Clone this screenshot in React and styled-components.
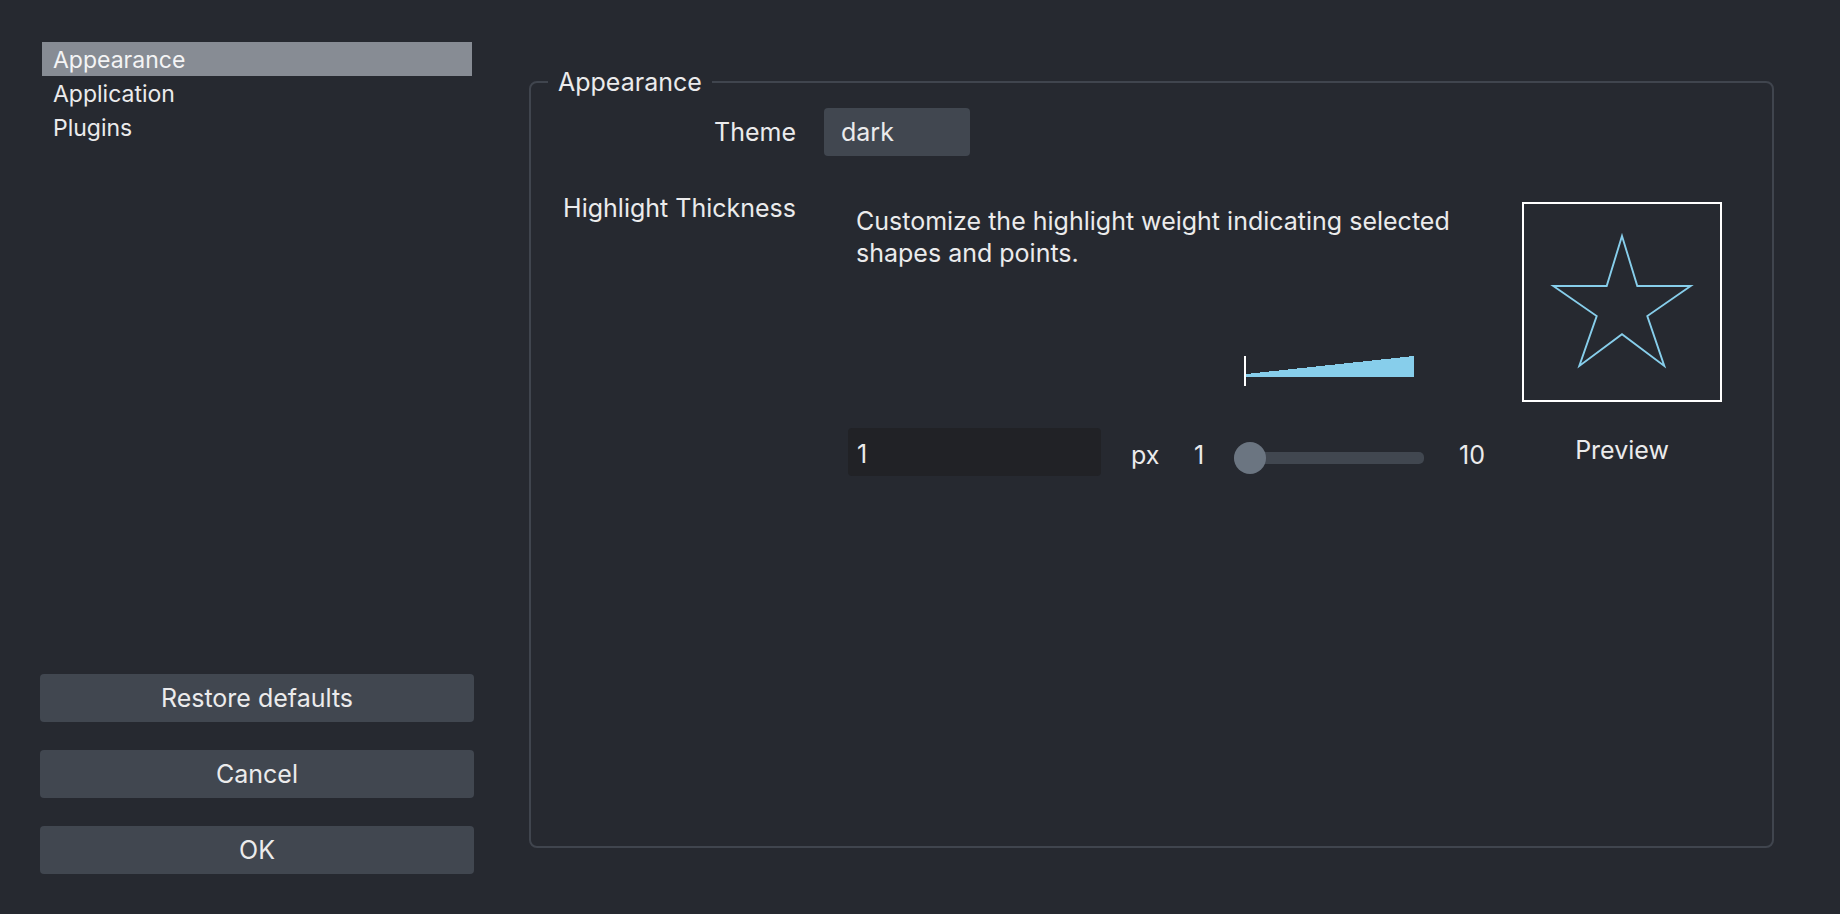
import React from 'react';
import styled, { createGlobalStyle } from 'styled-components';

const GlobalStyle = createGlobalStyle`
  html, body { margin: 0; padding: 0; background: #262930; }
  body {
    font-family: Inter, "Noto Sans", "Liberation Sans", sans-serif;
    color: #ebebec;
    font-size: 25px;
  }
  * { box-sizing: border-box; }
`;

const Window = styled.div`
  display: flex;
  width: 1840px;
  height: 914px;
  padding: 42px 66px 40px 40px;
  background: #262930;
`;

const Sidebar = styled.aside`
  width: 434px;
  flex: none;
  display: flex;
  flex-direction: column;
  justify-content: space-between;
`;

const NavList = styled.ul`
  list-style: none;
  margin: 0 0 0 2px;
  padding: 0;
  width: 430px;
  font-size: 23px;
`;

const NavItem = styled.li`
  height: 34px;
  padding: 2px 0 0 11px;
  line-height: 32px;
  background: ${(p) => (p.$active ? '#878c94' : 'transparent')};
  color: ${(p) => (p.$active ? '#f4f4f5' : '#ebebec')};
`;

const ButtonStack = styled.div`
  display: flex;
  flex-direction: column;
  gap: 28px;
`;

const Button = styled.button`
  height: 48px;
  border: none;
  border-radius: 4px;
  background: #414750;
  color: #ebebec;
  font-family: inherit;
  font-size: 25px;
  padding: 0;
`;

const Main = styled.main`
  flex: 1;
  margin-left: 55px;
  padding: 24px 0 26px;
  display: flex;
  flex-direction: column;
`;

const Group = styled.fieldset`
  flex: 1;
  margin: 0;
  padding: 10px 0 0;
  border: 2px solid #40454e;
  border-radius: 8px;
  min-width: 0;
`;

const Legend = styled.legend`
  margin-left: 17px;
  padding: 1px 10px 0;
  line-height: 31px;
  font-size: 25px;
`;

const Form = styled.div`
  display: grid;
  grid-template-columns: 265px 1fr;
  column-gap: 28px;
  row-gap: 36px;
  align-items: start;
`;

const FieldLabel = styled.div`
  text-align: right;
  line-height: ${(p) => p.$lh}px;
`;

const Combo = styled.div`
  width: 146px;
  height: 48px;
  border-radius: 4px;
  background: #414750;
  padding-left: 17px;
  line-height: 48px;
`;

const Thickness = styled.div`
  display: flex;
  gap: 24px;
  padding: 10px 0 0 24px;
`;

const LeftCol = styled.div`
  width: 650px;
  flex: none;
`;

const Description = styled.p`
  margin: 3px 0 0 8px;
  max-width: 640px;
  line-height: 32px;
`;

const ControlGrid = styled.div`
  margin-top: 87px;
  display: grid;
  grid-template-columns: 253px 93px 40px 190px auto;
  row-gap: 42px;
  align-items: start;
`;

const Wedge = styled.svg`
  grid-column: 4;
  grid-row: 1;
  margin-left: 10px;
  display: block;
`;

const NumberInput = styled.input`
  grid-column: 1;
  grid-row: 2;
  width: 253px;
  height: 48px;
  border: none;
  border-radius: 4px;
  background: #212226;
  color: #ebebec;
  font-family: inherit;
  font-size: 25px;
  padding: 4px 0 0 9px;
  outline: none;
`;

const Unit = styled.span`
  grid-row: 2;
  padding-left: ${(p) => p.$pad}px;
  padding-top: 6px;
  line-height: 42px;
`;

const Slider = styled.div`
  grid-row: 2;
  grid-column: 4;
  position: relative;
  height: 32px;
  margin-top: 14px;
  display: flex;
  align-items: center;
`;

const Track = styled.div`
  width: 100%;
  height: 12px;
  border-radius: 5px;
  background: #414750;
`;

const Handle = styled.div`
  position: absolute;
  left: 0;
  top: 0;
  width: 32px;
  height: 32px;
  border-radius: 50%;
  background: #6b7581;
`;

const RightCol = styled.div`
  width: 200px;
  display: flex;
  flex-direction: column;
  align-items: center;
  gap: 32px;
`;

const PreviewBox = styled.div`
  width: 200px;
  height: 200px;
  border: 2px solid #ffffff;
`;

const StarSvg = styled.svg`
  display: block;
`;

const PreviewLabel = styled.div`
  line-height: 32px;
`;

export default function App() {
  return (
    <>
      <GlobalStyle />
      <Window>
        <Sidebar>
          <NavList>
            <NavItem $active>Appearance</NavItem>
            <NavItem>Application</NavItem>
            <NavItem>Plugins</NavItem>
          </NavList>
          <ButtonStack>
            <Button>Restore defaults</Button>
            <Button>Cancel</Button>
            <Button>OK</Button>
          </ButtonStack>
        </Sidebar>
        <Main>
          <Group>
            <Legend>Appearance</Legend>
            <Form>
              <FieldLabel $lh={48}>Theme</FieldLabel>
              <Combo>dark</Combo>
              <FieldLabel $lh={32}>Highlight Thickness</FieldLabel>
              <Thickness>
                <LeftCol>
                  <Description>
                    Customize the highlight weight indicating selected shapes and points.
                  </Description>
                  <ControlGrid>
                    <Wedge width="170" height="30" viewBox="0 0 170 30" shapeRendering="crispEdges">
                      <polygon points="2,18 170,0 170,21 2,21" fill="#87ceeb" />
                      <rect x="0" y="0" width="2" height="30" fill="#ffffff" />
                    </Wedge>
                    <NumberInput value="1" readOnly />
                    <Unit $pad={30}>px</Unit>
                    <Unit $pad={0}>1</Unit>
                    <Slider>
                      <Track />
                      <Handle />
                    </Slider>
                    <Unit $pad={35}>10</Unit>
                  </ControlGrid>
                </LeftCol>
                <RightCol>
                  <PreviewBox>
                    <StarSvg width="196" height="196" viewBox="0 0 196 196">
                      <polygon
                        points="98,32 113.3,82 166.7,82 123.3,112 140.3,162 98,130.3 55.3,162 72.7,112 29.3,82 82.7,82"
                        fill="none"
                        stroke="#87ceeb"
                        strokeWidth="1.9"
                      />
                    </StarSvg>
                  </PreviewBox>
                  <PreviewLabel>Preview</PreviewLabel>
                </RightCol>
              </Thickness>
            </Form>
          </Group>
        </Main>
      </Window>
    </>
  );
}
